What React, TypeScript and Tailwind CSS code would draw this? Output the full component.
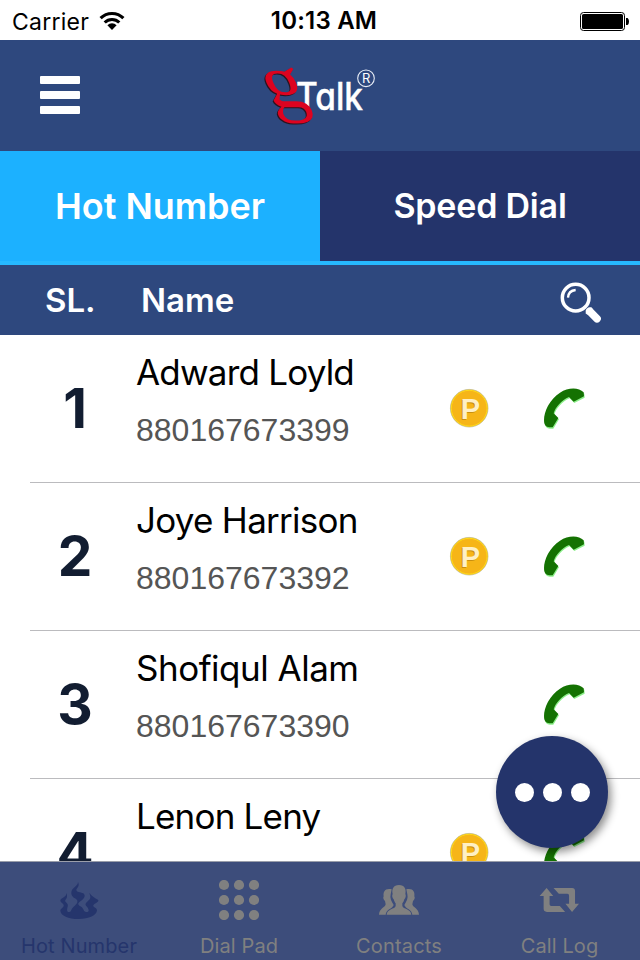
import React from "react";

const contacts = [
  { sl: 1, name: "Adward Loyld", phone: "880167673399", coin: true, fit: "tracking-[-0.8px]" },
  { sl: 2, name: "Joye Harrison", phone: "880167673392", coin: true, fit: "tracking-[-0.73px]" },
  { sl: 3, name: "Shofiqul Alam", phone: "880167673390", coin: false, fit: "tracking-[-0.5px]" },
  { sl: 4, name: "Lenon Leny", phone: "880167673391", coin: true, fit: "tracking-[-0.8px]" },
];

function Wifi() {
  return (
    <svg className="ml-[10px] h-[20px] w-[26px]" viewBox="0 0 26 20">
      <g fill="none" stroke="#000" strokeWidth="3.1">
        <path d="M1.6 7.2 A16 16 0 0 1 24.4 7.2" />
        <path d="M5.7 11.5 A10.4 10.4 0 0 1 20.3 11.5" />
      </g>
      <path d="M8.4 14.2 A6.6 6.6 0 0 1 17.6 14.2 L13 18.9 Z" />
    </svg>
  );
}

function Battery() {
  return (
    <svg className="h-[20px] w-[50px]" viewBox="0 0 50 20">
      <rect x="0.5" y="1.5" width="44" height="18" rx="3" fill="#fff" stroke="#000" />
      <rect x="2" y="3" width="41" height="15" rx="1.6" />
      <path d="M46 7 H47.6 Q49 8 49 10.5 Q49 13 47.6 14 H46 Z" />
    </svg>
  );
}

function Logo() {
  return (
    <svg className="h-[64px] w-[120px] overflow-visible" viewBox="260 63 120 64">
      <text x="296" y="109" fontFamily="Inter, sans-serif" fontSize="37.5" fontWeight="500" fill="#fff" stroke="#fff" strokeWidth="0.4" textLength="67" lengthAdjust="spacingAndGlyphs" style={{ fontFeatureSettings: "'cv11'" }}>Talk</text>
      <g fontFamily="'Liberation Serif', serif" fontSize="77">
        <text transform="translate(270.5 107.4) skewX(22) scale(1.05 1)" fill="#2a1420">g</text>
        <text transform="translate(271.6 106.2) skewX(22) scale(1.05 1)" fill="#dd0320">g</text>
      </g>
      <circle cx="366" cy="77.3" r="8.3" fill="none" stroke="#e8edf6" strokeWidth="1.1" />
      <text x="366.2" y="82" textAnchor="middle" fontFamily="Inter, sans-serif" fontSize="13" fill="#fff">R</text>
    </svg>
  );
}

function Search() {
  return (
    <svg className="h-[41px] w-[41px]" viewBox="718 394 123 123">
      <g fill="none" stroke="#fff">
        <circle cx="765" cy="441" r="40" strokeWidth="10.5" />
        <path d="M742 441 Q743 420 765 418" strokeWidth="7" />
        <path d="M807 482 L829 504" strokeWidth="23" strokeLinecap="round" />
      </g>
      <path d="M794 487 L811 469 L816 474 L800 492 Z" fill="#fff" />
    </svg>
  );
}

function Coin() {
  return (
    <svg className="h-[40px] w-[40px]" viewBox="0 0 40 40">
      <circle cx="20.2" cy="20.2" r="18.8" fill="#f6b518" stroke="#b9b98c" strokeWidth="0.7" />
      <circle cx="20.2" cy="20.2" r="17.9" fill="none" stroke="#ffda18" strokeWidth="1" />
      <g fontFamily="'Liberation Sans', sans-serif" fontWeight="700" fontSize="29" textAnchor="middle">
        <text x="20.4" y="32" fill="#c98f10">P</text>
        <text x="21.4" y="31" fill="#fff0c4">P</text>
      </g>
    </svg>
  );
}

const handset =
  "M462 77 L461 65 C446 49 414 50 390 66 C354 90 338 132 343 158 C347 171 358 170 368 170 L385 142 L371 128 C375 111 395 88 417 79 L431 93 Z";

function Phone() {
  return (
    <svg className="h-[41px] w-[41px]" viewBox="342 52 123 123">
      <path d={handset} fill="#8ef08c" transform="translate(2 4)" />
      <path d={handset} fill="#147202" />
    </svg>
  );
}

function Fire() {
  return (
    <svg className="h-[40px] w-[40px]" viewBox="10 12 120 120" fill="#25356c">
      <path d="M33 51 C36 64 33 67 29 72 C25 79 40 80 36 92 C33 101 34 109 41 108 C48 107 45 99 54 92 C66 83 70 74 58 67 C49 61 45 55 48 44 C52 34 67 30 67 18 C73 30 64 36 62 41 C62 49 74 47 83 52 C92 60 84 70 74 76 C66 82 66 86 74 91 C86 97 82 108 92 108 C104 108 99 97 91 89 C86 82 96 77 102 70 C107 62 102 57 101 50 C107 60 117 65 128 72 C129 80 115 82 113 88 C111 94 123 95 124 103 C123 119 100 129 69 129 C38 129 15 119 14 104 C15 97 26 94 24 87 C22 81 14 80 14 73 C18 64 31 65 33 51 Z" />
    </svg>
  );
}

function DialPad() {
  return (
    <svg className="h-[40px] w-[40px]" viewBox="0 0 40 40" fill="#808080">
      {[5, 20, 35].map((y) => [5, 20, 35].map((x) => <circle key={`${x}-${y}`} cx={x} cy={y} r="5.1" />))}
    </svg>
  );
}

function People() {
  return (
    <svg className="h-[40px] w-[40px]" viewBox="177 90 120 120" fill="#808080">
      <path d="M215 118 C195 114 189 125 191 139 C188 144 191 150 195 153 L197 163 C195 173 178 175 177 194 H197 C198 178 217 177 221 165 C214 155 209 144 212 133 Z" />
      <path d="M259 118 C279 114 285 125 283 139 C286 144 283 150 279 153 L277 163 C279 173 296 175 297 194 H277 C276 178 257 177 253 165 C260 155 265 144 262 133 Z" />
      <path d="M237 105 C220 105 215 117 218 132 C215 137 217 144 221 148 C223 155 225 158 227 160 V168 C225 178 201 176 200 194 H274 C273 176 249 178 247 168 V160 C250 157 252 153 253 148 C257 144 259 137 256 132 C259 117 254 105 237 105 Z" />
    </svg>
  );
}

function Repeat() {
  return (
    <svg className="h-[40px] w-[40px]" viewBox="659 90 121 120" fill="#808080">
      <path d="M661 138 L682 114 L702 138 H691 V163 Q691 168 696 168 H722 L738 186 H683 Q673 186 673 176 V138 Z" />
      <path d="M703 114 H759 Q768 114 768 123 V161 H780 L759 186 L739 161 H750 V137 Q750 131 745 131 H719 Z" />
    </svg>
  );
}

function ContactRow({ c }: { c: (typeof contacts)[number] }) {
  return (
    <div className="flex h-[148px] shrink-0">
      <div className="w-[30px]" />
      <div className="flex flex-1 border-b border-[#bbbbbe]">
        <div className="w-[90px] pt-[43px] text-center text-[55px] leading-[60px] font-bold text-[#121d31]">{c.sl}</div>
        <div className="w-[329px] pt-[17px] pl-[16px] whitespace-nowrap">
          <div className={`text-[35px] leading-[40px] text-black ${c.fit}`}>{c.name}</div>
          <div className="mt-[18px] font-['Liberation_Sans',Arial,sans-serif] text-[32px] leading-[40px] text-[#555]">{c.phone}</div>
        </div>
        <div className="w-[95px] pt-[53px]">{c.coin && <Coin />}</div>
        <div className="pt-[53px]"><Phone /></div>
      </div>
    </div>
  );
}

const tabs = [
  { label: "Hot Number", icon: <Fire />, color: "text-[#25356c]", fit: "tracking-[0.12px]" },
  { label: "Dial Pad", icon: <DialPad />, color: "text-[#808080]", fit: "tracking-[0.12px]" },
  { label: "Contacts", icon: <People />, color: "text-[#808080]", fit: "tracking-[0.2px]" },
  { label: "Call Log", icon: <Repeat />, color: "text-[#808080]", fit: "pl-px tracking-[0.1px]" },
];

export default function App() {
  return (
    <div className="relative flex h-[960px] w-[640px] flex-col overflow-hidden bg-white font-['Inter',sans-serif]">
      <div className="grid h-[40px] shrink-0 grid-cols-3 items-center text-[23px] leading-[40px] text-black">
        <div className="flex items-center pt-[2px] pl-[12px]">
          <span className="tracking-[0.25px]">Carrier</span>
          <div className="-mt-[2px]"><Wifi /></div>
        </div>
        <div className="pl-[8px] text-center text-[24px] font-semibold tracking-[0.2px] whitespace-nowrap">10:13 AM</div>
        <div className="flex justify-end pr-[10px]"><Battery /></div>
      </div>

      <header className="flex h-[111px] shrink-0 items-center bg-[#2e487e]">
        <div className="-mt-px ml-[40px] flex w-[40px] flex-col gap-[7px]">
          <div className="h-[8px] rounded-[1px] bg-white" />
          <div className="h-[8px] rounded-[1px] bg-white" />
          <div className="h-[8px] rounded-[1px] bg-white" />
        </div>
        <div className="ml-[180px]"><Logo /></div>
      </header>

      <div className="grid h-[114px] shrink-0 grid-cols-2 border-b-4 border-[#26b9ff] text-center font-semibold text-white">
        <div className="bg-[#1cb1ff] text-[36px] leading-[110px] tracking-[-0.05px]">Hot Number</div>
        <div className="bg-[#24346b] text-[34px] leading-[110px] tracking-[-0.2px]">Speed Dial</div>
      </div>

      <div className="flex h-[70px] shrink-0 items-center bg-[#2e487e] text-[33px] font-semibold text-white">
        <div className="w-[141px] pt-[2px] pl-[45px]">SL.</div>
        <div className="flex-1 pt-[2px]">Name</div>
        <div className="mt-[4px] mr-[39px]"><Search /></div>
      </div>

      <main className="flex h-[526px] shrink-0 flex-col overflow-hidden">
        {contacts.map((c) => <ContactRow key={c.sl} c={c} />)}
      </main>

      <nav className="grid h-[99px] shrink-0 grid-cols-4 border-t border-[#9a9eaa] bg-[#3d4d7b]">
        {tabs.map((t) => (
          <div key={t.label} className={`flex flex-col items-center pt-[18px] pr-[2px] text-[20px] ${t.color}`}>
            {t.icon}
            <div className={`mt-[14px] leading-[24px] ${t.fit}`}>{t.label}</div>
          </div>
        ))}
      </nav>

      <button className="absolute top-[736px] left-[496px] flex h-[112px] w-[112px] items-center justify-center gap-[9px] rounded-full bg-[#24346b] shadow-[3px_4px_8px_rgba(0,0,0,0.45)]">
        <span className="h-[19px] w-[19px] rounded-full bg-white" />
        <span className="h-[19px] w-[19px] rounded-full bg-white" />
        <span className="h-[19px] w-[19px] rounded-full bg-white" />
      </button>
    </div>
  );
}
